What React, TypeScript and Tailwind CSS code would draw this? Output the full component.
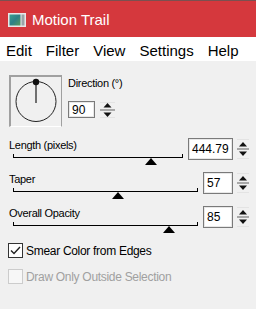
import React from "react";

function Spinner({ w = 14, h = 20 }: { w?: number; h?: number }) {
  const cx = w / 2;
  const mid = h / 2;
  return (
    <svg width={w} height={h} viewBox={`0 0 ${w} ${h}`} className="block">
      <rect x="0" y="0" width={w} height={h} fill="#f0f0f0" />
      <line x1="1" y1="0.5" x2={w - 1} y2="0.5" stroke="#e3e3e3" />
      <line x1="1" y1={h - 0.5} x2={w - 1} y2={h - 0.5} stroke="#e3e3e3" />
      <polygon points={`${cx - 4},${mid - 2.5} ${cx + 4},${mid - 2.5} ${cx},${mid - 7}`} fill="#111" />
      <rect x="1" y={mid - 1} width={w - 2} height="2" fill="#a8a8a8" />
      <polygon points={`${cx - 4},${mid + 2.5} ${cx + 4},${mid + 2.5} ${cx},${mid + 7}`} fill="#111" />
    </svg>
  );
}

function NumBox({ value, w }: { value: string; w: number }) {
  return (
    <div
      className="h-[22px] border border-[#7a7a7a] bg-white text-[12px] leading-none text-black"
      style={{ width: w }}
    >
      <div className="w-full h-full border border-[#e8e8e8] flex items-center pl-[2px]">{value}</div>
    </div>
  );
}

function Slider({
  label,
  trackW,
  thumb,
  value,
  boxW,
}: {
  label: string;
  trackW: number;
  thumb: number;
  value: string;
  boxW: number;
}) {
  return (
    <div className="flex items-start h-[22px]">
      <div className="flex flex-col mt-[1px]">
        <div className="text-[11px] leading-[13px] text-black tracking-[-0.3px] whitespace-nowrap">{label}</div>
        <div className="relative ml-[4px] mt-[5px] h-[1px] bg-black" style={{ width: trackW }}>
          <div className="absolute left-0 top-[-3px] w-[1px] h-[3px] bg-black" />
          <div className="absolute right-0 top-[-3px] w-[1px] h-[3px] bg-black" />
          <svg
            width="12"
            height="7"
            viewBox="0 0 12 7"
            className="absolute top-[1px]"
            style={{ left: thumb - 6 }}
          >
            <polygon points="0,7 12,7 6,0" fill="#000" />
          </svg>
        </div>
      </div>
      <div className="ml-auto flex items-center gap-[3px]">
        <NumBox value={value} w={boxW} />
        <Spinner />
      </div>
    </div>
  );
}

export default function App() {
  return (
    <div className="w-[256px] h-[309px] bg-[#f0f0f0] flex flex-col overflow-hidden font-['Liberation_Sans',Arial,sans-serif]">
      {/* Title bar */}
      <div className="h-[37px] bg-[#d5383d] border-t border-[#7a5050] flex items-center pl-[8px] shrink-0">
        <svg width="18" height="14" viewBox="0 0 18 14" className="block mt-[1px]">
          <defs>
            <linearGradient id="g" x1="0" y1="0" x2="1" y2="1">
              <stop offset="0" stopColor="#3b9e8f" />
              <stop offset="0.5" stopColor="#2f7f86" />
              <stop offset="1" stopColor="#5a9a5a" />
            </linearGradient>
          </defs>
          <rect x="0" y="0" width="18" height="14" fill="#e8e8e8" />
          <rect x="1.5" y="1.5" width="11" height="11" fill="url(#g)" />
          <rect x="13.5" y="1.5" width="3" height="11" fill="#9aa4a6" />
        </svg>
        <span className="ml-[6px] text-white text-[15px] leading-none mt-[1px]">Motion Trail</span>
      </div>
      {/* Menu bar */}
      <div className="h-[24px] bg-white flex items-center pl-[6px] gap-[14px] text-[15px] text-black leading-none pt-[3px] shrink-0">
        <span>Edit</span>
        <span>Filter</span>
        <span>View</span>
        <span>Settings</span>
        <span>Help</span>
      </div>
      {/* Body */}
      <div className="flex flex-col pl-[9px] pr-[6px] pt-[14px]">
        <div className="flex items-start gap-[6px]">
          <div className="w-[53px] h-[52px] border-t-2 border-l-2 border-r border-b border-t-[#a0a0a0] border-l-[#a0a0a0] border-r-[#a0a0a0] border-b-white bg-[#f0f0f0]">
            <svg width="50" height="49" viewBox="0 0 50 49" className="block">
              <circle cx="25" cy="24.5" r="20" fill="none" stroke="#222" strokeWidth="1" />
              <line x1="25" y1="5" x2="25" y2="26" stroke="#707070" strokeWidth="2" />
              <circle cx="25" cy="5" r="3.2" fill="#111" />
            </svg>
          </div>
          <div className="flex flex-col">
            <div className="text-[11px] leading-[13px] tracking-[-0.3px] mt-[2px] text-black">Direction (°)</div>
            <div className="flex items-center gap-[4px] mt-[11px]">
              <div className="w-[27px] h-[17px] border border-[#7a7a7a] bg-white">
                <div className="w-full h-full border border-[#e8e8e8] flex items-center pl-[2px] text-[12px] leading-none">90</div>
              </div>
              <Spinner w={17} h={16} />
            </div>
          </div>
        </div>

        <div className="mt-[11px]">
          <Slider label="Length (pixels)" trackW={170} thumb={138} value="444.79" boxW={45} />
        </div>
        <div className="mt-[12px]">
          <Slider label="Taper" trackW={185} thumb={105} value="57" boxW={30} />
        </div>
        <div className="mt-[12px]">
          <Slider label="Overall Opacity" trackW={185} thumb={156} value="85" boxW={30} />
        </div>

        <div className="flex items-center mt-[15px] ml-[-1px]">
          <div className="w-[15px] h-[15px] border border-[#333] bg-white flex items-center justify-center">
            <svg width="11" height="9" viewBox="0 0 11 9">
              <polyline points="1,4.5 4,7.5 10,1" fill="none" stroke="#222" strokeWidth="1.4" />
            </svg>
          </div>
          <span className="ml-[3px] text-[12px] tracking-[-0.3px] leading-none text-black">Smear Color from Edges</span>
        </div>
        <div className="flex items-center mt-[11px] ml-[-1px]">
          <div className="w-[15px] h-[15px] border border-[#cccccc] bg-[#f7f7f7]" />
          <span className="ml-[3px] text-[12px] tracking-[-0.3px] leading-none text-[#a0a0a0]">Draw Only Outside Selection</span>
        </div>
      </div>
    </div>
  );
}
